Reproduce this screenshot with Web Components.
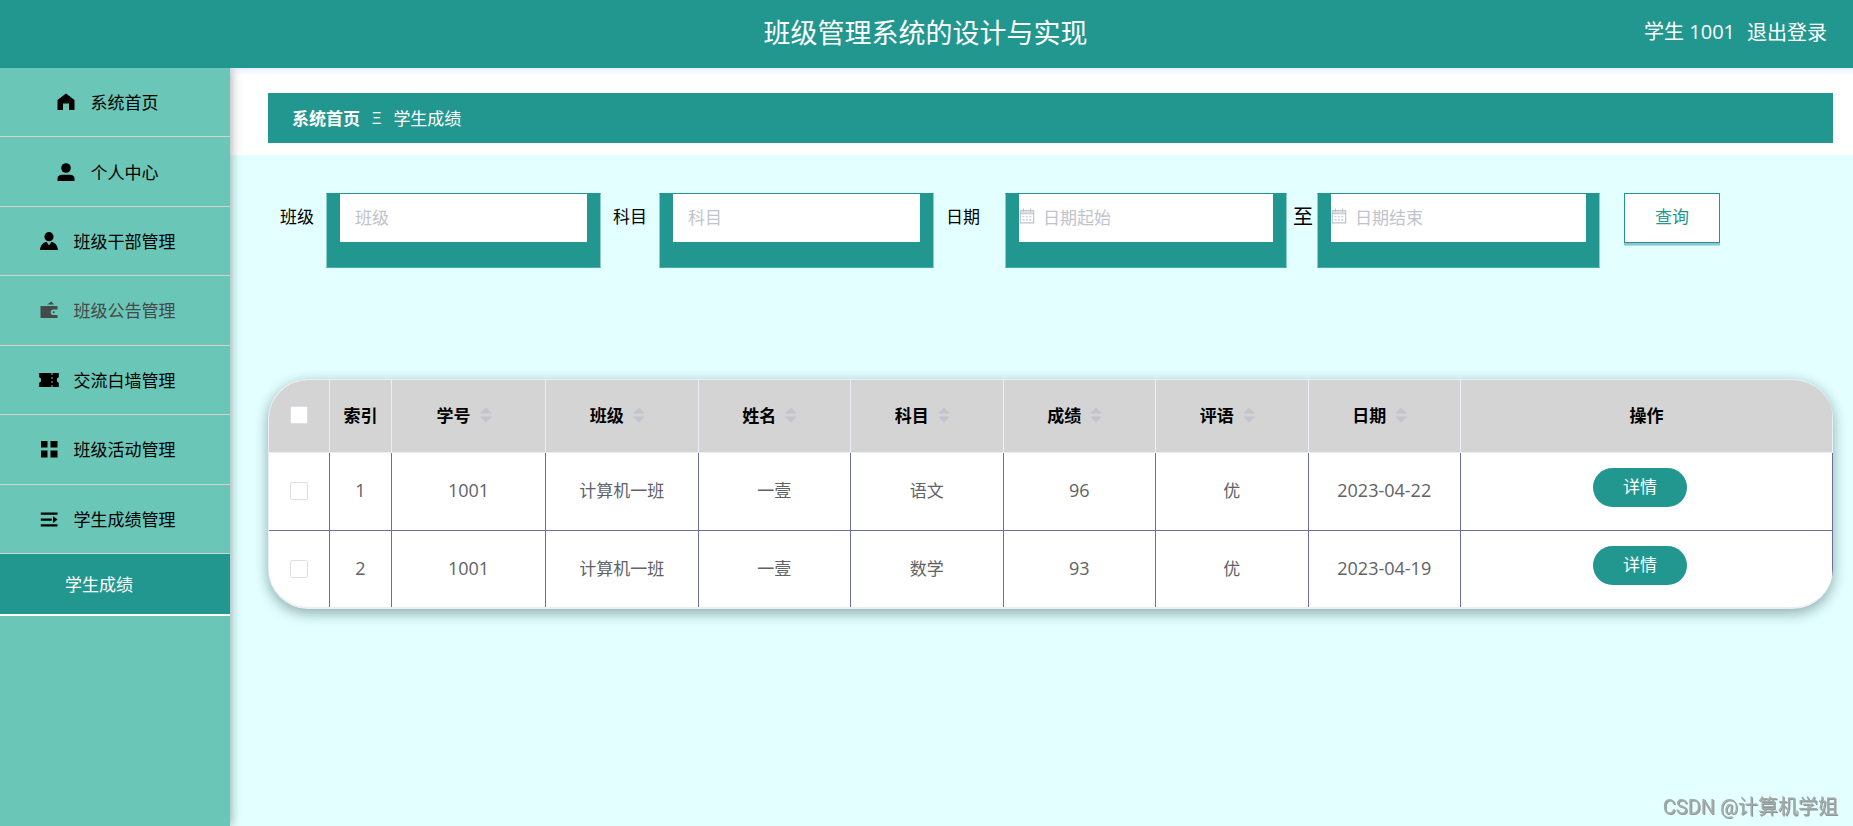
<!DOCTYPE html>
<html lang="zh-CN">
<head>
<meta charset="utf-8">
<title>班级管理系统的设计与实现</title>
<style>
  :root {
    --teal: #22978f;
    --mint: #6ac6b7;
    --page: #e3ffff;
    --line: #6e6e99;
  }
  html, body { height: 100%; }
  body {
    margin: 0;
    background: var(--page);
    color: #000;
    font: 17px/24px "Noto Sans CJK SC", sans-serif;
  }
</style>
</head>
<body>
<class-app></class-app>

<script>
const define = (name, html, setup) => {
  const template = document.createElement('template');
  template.innerHTML = html;
  customElements.define(name, class extends HTMLElement {
    constructor() {
      super();
      this.attachShadow({ mode: 'open' }).append(template.content.cloneNode(true));
    }
    connectedCallback() {
      if (setup && !this.ready) {
        this.ready = true;
        setup(this, this.shadowRoot);
      }
    }
  });
};

const icons = {
  home: '<path d="M9 .5 17.5 7v10H12v-6.500H6V17H.5V7z"/>',
  user: '<circle cx="9" cy="5" r="4.8"/><path d="M.5 18v-2.500C.5 13 2.500 11.800 5 11.800h8c2.500 0 4.500 1.200 4.500 3.700V18z"/>',
  custom: '<circle cx="9" cy="4.700" r="4.600"/><path d="M0 18C.3 14 3 10.500 6.500 9.800L9 13.500l2.500-3.700C15 10.500 17.700 14 18 18z"/>',
  wallet: '<path d="M7 3.500 11.500.5 14 3.500zM.5 5h17v3.500h-4a2.800 2.800 0 0 0 0 5.600h4V17H.5z"/><circle cx="13.700" cy="11.200" r="1"/>',
  ticket: '<path d="M-.8 2h12.300v2h1V2h6.300v4.300a2.800 2.800 0 0 0 0 5.400V16h-6.300v-2h-1v2H-.8v-4.300a2.800 2.800 0 0 0 0-5.400zm12.300 4v2h1V6zm0 4v2h1v-2z"/>',
  grid: '<path d="M1 1h6.500v6.500H1zM10.500 1H17.500v6.500h-7zM1 10.500h6.500v7H1zM10.500 10.500h7v7h-7z"/>',
  list: '<path d="M.8 2.500h16.700v2.200H.8zM.8 8.500h11v2.200h-11zM.8 14.300h16.700v2.200H.8zM13 6.300l4.500 3.300-4.500 3.300z"/>',
  calendar: '<path fill="none" stroke="currentColor" stroke-width="1.300" d="M1.500 3h15v13.800h-15zM1.500 6.500h15M5 .5v4M13 .5v4"/><path fill="none" stroke="currentColor" stroke-width="1.300" stroke-dasharray="2.200 1.600" d="M4 9.800h10.500M4 13.300h10.500"/><path d="M2 4h14v2H2z" opacity=".6"/>',
  sort: '<path d="M9 1.500 15 7.500H3zM9 16.500 15 10.500H3z"/>'
};

define('app-icon', `
  <style>
    :host { display: block; flex: none; width: 18px; height: 18px; }
    svg { display: block; width: 100%; height: 100%; fill: currentColor; overflow: visible; }
  </style>
  <svg viewBox="0 0 18 18" aria-hidden="true"></svg>`,
  (el, root) => { root.querySelector('svg').innerHTML = icons[el.getAttribute('name')]; });

define('app-header', `
  <style>
    :host {
      display: grid; grid-template-columns: 1fr auto 1fr; align-items: center;
      box-sizing: border-box; height: 68px; padding: 0 26px 4px 24px;
      background: var(--teal); color: #fff;
    }
    h1 { grid-column: 2; margin: 0; font-size: 27px; line-height: 40px; font-weight: 400; }
    .account { display: flex; justify-content: flex-end; gap: 12px; font-size: 20px; line-height: 30px; }
    .account span { font-family: "Open Sans", "Noto Sans CJK SC", sans-serif; }
    a { color: inherit; text-decoration: none; }
  </style>
  <h1>班级管理系统的设计与实现</h1>
  <div class="account"><span>学生 1001</span><a href="#logout">退出登录</a></div>`);

define('nav-item', `
  <style>
    :host { display: block; border-bottom: 1px solid #d3d3d3; }
    :host([muted]) { color: #444a49; }
    a {
      display: flex; align-items: center; justify-content: center; gap: 16px;
      height: 100%; padding-right: 15px; color: inherit; text-decoration: none;
    }
  </style>
  <a href="#"><app-icon></app-icon><slot></slot></a>`,
  (el, root) => {
    const icon = document.createElement('app-icon');
    icon.setAttribute('name', el.getAttribute('icon'));
    root.querySelector('app-icon').replaceWith(icon);
  });

define('side-nav', `
  <style>
    :host { display: block; background: var(--mint); box-shadow: 1px 0 10px rgba(0, 0, 0, .35); clip-path: inset(0 -20px 0 0); }
    nav { display: grid; grid-auto-rows: 1fr; height: 486px; }
    .sub {
      display: flex; align-items: center; height: 60px; padding-left: 65px;
      background: var(--teal); color: #fff; text-decoration: none; border-bottom: 2px solid #fff;
    }
  </style>
  <nav>
    <nav-item icon="home">系统首页</nav-item>
    <nav-item icon="user">个人中心</nav-item>
    <nav-item icon="custom">班级干部管理</nav-item>
    <nav-item icon="wallet" muted>班级公告管理</nav-item>
    <nav-item icon="ticket">交流白墙管理</nav-item>
    <nav-item icon="grid">班级活动管理</nav-item>
    <nav-item icon="list">学生成绩管理</nav-item>
  </nav>
  <a class="sub" href="#scores" aria-current="page">学生成绩</a>`);

define('crumb-bar', `
  <style>
    :host { display: block; padding: 25px 20px 12px 38px; background: linear-gradient(#e8f1ff, #fff 7px); }
    nav {
      display: flex; align-items: center; gap: 12px; height: 50px; padding: 0 24px;
      background: var(--teal); color: #fff;
    }
    a { color: inherit; font-weight: 700; text-decoration: none; }
    i { font: 17px/24px "Open Sans", sans-serif; }
  </style>
  <nav aria-label="当前位置"><a href="#home">系统首页</a><i>Ξ</i><span>学生成绩</span></nav>`);

define('search-field', `
  <style>
    :host { display: flex; flex: 0 1 321px; min-width: 0; gap: 12px; }
    :host([kind="date"]) { flex-basis: 341px; gap: 25px; }
    :host([kind="until"]) { flex-basis: 307px; gap: 4px; }
    label { flex: none; line-height: 46px; }
    :host([kind="until"]) label { font-size: 20px; }
    .box {
      display: flex; flex: 1; min-width: 0; box-sizing: border-box; height: 75px;
      padding: 0 13px 25px; background: var(--teal); background-clip: padding-box;
      border: 1px solid #8ccfca; border-top-color: var(--teal); border-bottom-color: #49aba5;
    }
    .inner { display: flex; flex: 1; min-width: 0; align-items: flex-start; background: #fff; color: #c0c4cc; }
    app-icon { display: none; width: 16px; height: 16px; margin-top: 14px; }
    :host([kind]) app-icon { display: block; }
    input {
      flex: 1; min-width: 0; height: 45px; box-sizing: border-box; margin: 0; padding: 0 15px;
      border: 0; outline: 0; background: none; font: inherit; color: #606266;
    }
    :host([kind]) input { padding-left: 8px; }
    input::placeholder { color: #c0c4cc; opacity: 1; }
  </style>
  <label for="value"></label>
  <div class="box"><div class="inner"><app-icon name="calendar"></app-icon><input id="value" type="text"></div></div>`,
  (el, root) => {
    root.querySelector('label').textContent = el.getAttribute('label');
    root.querySelector('input').placeholder = el.getAttribute('hint');
  });

define('search-form', `
  <style>
    :host { display: block; }
    form { display: flex; align-items: flex-start; gap: 12px; padding-left: 12px; }
    .range { display: flex; gap: 6px; flex: 0 1 654px; min-width: 0; }
    button {
      flex: none; width: 96px; height: 50px; margin: 0 0 0 12px; padding: 0 0 4px;
      border: 1px solid var(--teal); background: #fff; color: var(--teal); font: inherit;
      box-shadow: 0 2px 0 #8fc3d0, 0 3px 0 #b5dde6;
    }
  </style>
  <form>
    <search-field label="班级" hint="班级"></search-field>
    <search-field label="科目" hint="科目"></search-field>
    <div class="range">
      <search-field kind="date" label="日期" hint="日期起始"></search-field>
      <search-field kind="until" label="至" hint="日期结束"></search-field>
    </div>
    <button type="button">查询</button>
  </form>`);

define('score-table', `
  <style>
    :host {
      display: block; overflow: hidden; background: #fff; border-radius: 40px;
      border: solid #ebeef5; border-width: 1px 0 2px 1px;
      box-shadow: 0 4px 14px rgba(0, 40, 40, .4);
    }
    table { width: 100%; table-layout: fixed; border-collapse: separate; border-spacing: 0; text-align: center; }
    .pick { width: 61px; }
    .index { width: 62px; }
    .first { width: 154px; }
    .action { width: 372px; }
    th, td { box-sizing: border-box; padding: 0; }
    th { height: 73px; padding-bottom: 2px; background: #d4d4d4; border: solid #ebeef5; border-width: 0 1px 1px 0; }
    td {
      height: 78px; padding-bottom: 3px; color: #606266;
      border: solid var(--line); border-width: 0 1px 1px 0;
    }
    tr:last-child td { height: 76px; border-bottom: 0; padding-bottom: 2px; }
    .number { font-family: "Open Sans", "Noto Sans CJK SC", sans-serif; font-size: 18px; }
    .sort { display: flex; align-items: center; justify-content: center; gap: 6px; padding-right: 6px; }
    .sort app-icon { color: #c0c4cc; }
    input {
      appearance: none; display: block; width: 18px; height: 18px; margin: 0 auto;
      border: 1px solid #dcdfe6; border-radius: 2px; background: #fff;
    }
    td input { position: relative; top: 1px; }
    button {
      display: block; width: 94px; height: 39px; margin: 0 auto 6px; padding: 0 0 2px;
      border: 0; border-radius: 20px; background: var(--teal); color: #fff; font: inherit;
    }
    td:last-child { padding-right: 13px; }
  </style>
  <table>
    <colgroup><col class="pick"><col class="index"><col class="first"><col span="6"><col class="action"></colgroup>
    <thead><tr><th><input type="checkbox" aria-label="全选"></th><th>索引</th></tr></thead>
    <tbody></tbody>
  </table>`,
  (el, root) => {
    const head = root.querySelector('thead tr');
    for (const name of ['学号', '班级', '姓名', '科目', '成绩', '评语', '日期']) {
      head.insertAdjacentHTML('beforeend', `<th><div class="sort">${name}<app-icon name="sort"></app-icon></div></th>`);
    }
    head.insertAdjacentHTML('beforeend', '<th>操作</th>');
    const rows = [
      ['1', '1001', '计算机一班', '一壹', '语文', '96', '优', '2023-04-22'],
      ['2', '1001', '计算机一班', '一壹', '数学', '93', '优', '2023-04-19']
    ];
    root.querySelector('tbody').innerHTML = rows.map(row => `<tr>
      <td><input type="checkbox" aria-label="选择第 ${row[0]} 行"></td>
      ${row.map(value => `<td${/^\d/.test(value) ? ' class="number"' : ''}>${value}</td>`).join('')}
      <td><button type="button">详情</button></td></tr>`).join('');
  });

define('class-app', `
  <style>
    :host { display: flex; flex-direction: column; min-height: 100%; }
    .body { display: grid; grid-template-columns: 230px minmax(0, 1fr); flex: 1; }
    side-nav { position: relative; }
    .content { padding: 38px 20px 38px 38px; }
    score-table { margin-top: 111px; }
    .mark {
      position: fixed; right: 15px; bottom: 4px; font: 20px/30px Roboto, "Noto Sans CJK SC", sans-serif;
      color: #a3abab; text-shadow: 1px 1px 0 #8f9797;
    }
  </style>
  <app-header></app-header>
  <div class="body">
    <side-nav></side-nav>
    <main>
      <crumb-bar></crumb-bar>
      <div class="content">
        <search-form></search-form>
        <score-table></score-table>
      </div>
    </main>
  </div>
  <div class="mark">CSDN @计算机学姐</div>`);
</script>
</body>
</html>
